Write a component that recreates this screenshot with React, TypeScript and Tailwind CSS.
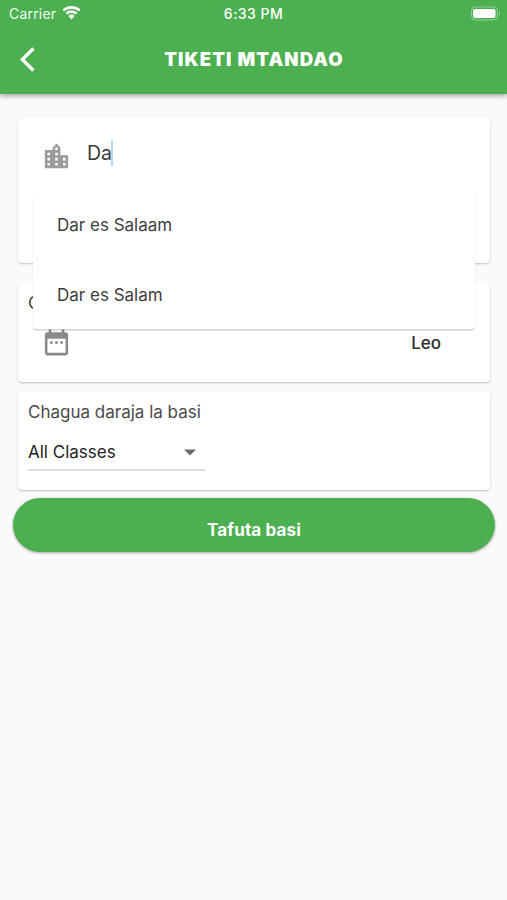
const suggestions = ['Dar es Salaam', 'Dar es Salam'];

function StatusBar() {
  return (
    <div className="relative flex h-[26px] items-center justify-between pl-[9px] pr-[6px] text-white">
      <div className="flex items-center gap-[6px] pt-[2px]">
        <span className="text-[14px] leading-4 tracking-[0.2px] text-green-50">Carrier</span>
        <svg className="-mt-[2px]" width="19" height="14" viewBox="0 0 19 14" fill="currentColor">
          <path d="M9.500 0C6 0 2.800 1.300 0.500 3.600l1.700 1.900C4.100 3.700 6.700 2.700 9.500 2.700s5.400 1 7.300 2.800l1.700-1.900C16.200 1.300 13 0 9.500 0z" />
          <path d="M9.500 4.300c-2.300 0-4.400.9-6 2.400l1.700 1.900c1.100-1 2.600-1.700 4.300-1.700s3.200.7 4.300 1.700l1.700-1.900c-1.600-1.500-3.700-2.400-6-2.400z" />
          <path d="M9.500 8.600c-1.200 0-2.200.5-3 1.300l3 3.600 3-3.600c-.8-.8-1.800-1.300-3-1.300z" />
        </svg>
      </div>
      <span className="absolute inset-x-0 top-[6px] text-center text-[14px] leading-4 font-medium tracking-[0.45px]">
        6:33 PM
      </span>
      <svg width="31" height="15" viewBox="0 0 31 15" fill="none">
        <rect x="1.500" y="1" width="26" height="13" rx="4" stroke="#93cf96" strokeWidth="1" />
        <rect x="3" y="3" width="22.500" height="9" rx="2" fill="#fff" />
        <path d="M29 5.500c1.300.7 1.300 3.300 0 4z" fill="#93cf96" />
      </svg>
    </div>
  );
}

function Suggestions() {
  return (
    <ul className="absolute left-[15px] top-[72px] z-20 h-[139px] w-[442px] rounded-[4px] bg-white shadow-[0_2px_1px_rgba(0,0,0,0.1),0_1px_2px_rgba(0,0,0,0.08)] before:absolute before:-inset-x-2 before:-top-2 before:h-3 before:bg-white">
      {suggestions.map((name) => (
        <li key={name} className="flex h-[70px] items-center pl-6 pt-px text-[17px] text-[#3e3e3e]">
          {name}
        </li>
      ))}
    </ul>
  );
}

export default function App() {
  return (
    <div className="h-[900px] w-[507px] overflow-hidden bg-[#fafafa] font-['Inter',sans-serif]">
      {/* App bar */}
      <header className="relative h-[94px] bg-[#4caf50] shadow-[0_2px_5px_rgba(0,0,0,0.35)]">
        <StatusBar />
        <div className="relative flex h-[67px] items-center justify-center">
          <button className="absolute left-[20px] top-[19px]" aria-label="Back">
            <svg width="15" height="29" viewBox="0 0 12 24" fill="#fff" stroke="#fff" strokeWidth="0.500">
              <path d="M11.670 3.870L9.900 2.100 0 12l9.900 9.900 1.770-1.770L3.540 12z" />
            </svg>
          </button>
          <h1 className="pl-px pt-px text-[18.5px] font-black tracking-[1.15px] text-white">TIKETI MTANDAO</h1>
        </div>
      </header>

      <main className="px-[18px] pt-6">
        {/* Departure city */}
        <section className="relative h-[145px] w-[472px] rounded-[4px] bg-white shadow-[0_1px_2px_rgba(0,0,0,0.24)]">
          <div className="flex pl-6 pt-[22px]">
            <svg className="-ml-px mt-px h-[31px] w-[31px]" viewBox="0 0 24 24" fill="#9b9b9b">
              <path d="M15 11V5l-3-3-3 3v2H3v14h18V11h-6zm-8 8H5v-2h2v2zm0-4H5v-2h2v2zm0-4H5V9h2v2zm6 8h-2v-2h2v2zm0-4h-2v-2h2v2zm0-4h-2V9h2v2zm0-4h-2V5h2v2zm6 12h-2v-2h2v2zm0-4h-2v-2h2v2z" />
            </svg>
            <div className="ml-[15px] flex h-[26px] items-center text-[19.5px] text-[#3a3a3a]">
              <span className="pt-[2px]">Da</span>
              <span className="-ml-px h-[26px] w-[2px] bg-[#b5d9f5]" />
            </div>
          </div>
          <Suggestions />
        </section>

        {/* Travel date */}
        <section className="mt-5 h-[99px] w-[472px] rounded-[4px] bg-white px-[10px] pt-[9px] shadow-[0_1px_2px_rgba(0,0,0,0.24)]">
          <p className="text-[17px] leading-[22px] text-[#3e3e3e]">C</p>
          <div className="flex items-center justify-between pl-[14px] pr-[39px] pt-[13px]">
            <svg className="-ml-px h-[31px] w-[31px]" viewBox="0 0 24 24" fill="#8a8a8a">
              <path d="M9 11H7v2h2v-2zm4 0h-2v2h2v-2zm4 0h-2v2h2v-2zm2-7h-1V2h-2v2H8V2H6v2H5c-1.110 0-2 .9-2 2v14c0 1.100.89 2 2 2h14c1.100 0 2-.9 2-2V6c0-1.100-.9-2-2-2zm0 16H5V9h14v11z" />
            </svg>
            <span className="pt-[2px] text-[17px] font-medium text-[#2c2c2c]">Leo</span>
          </div>
        </section>

        {/* Bus class */}
        <section className="mt-[9px] h-[99px] w-[472px] rounded-[4px] bg-white px-[10px] pt-[10px] shadow-[0_1px_2px_rgba(0,0,0,0.24)]">
          <p className="text-[17px] leading-[22px] text-[#4a4a4a]">Chagua daraja la basi</p>
          <div className="mt-[10px] flex h-[38px] w-[177px] items-center justify-between border-b-2 border-[#dedede] pr-2 text-[17px] text-[#222]">
            <span className="pt-1">All Classes</span>
            <svg className="mt-[2px]" width="14" height="7" viewBox="0 0 14 7" fill="#6b6b6b">
              <path d="M1 0.500h12l-6 6z" />
            </svg>
          </div>
        </section>

        <button className="-mx-[5px] mt-2 flex h-[54px] w-[482px] items-center justify-center rounded-[27px] bg-[#4caf50] pt-[11px] text-[17px] font-bold tracking-[0.15px] text-white shadow-[0_1px_3px_rgba(0,0,0,0.35)]">
          Tafuta basi
        </button>
      </main>
    </div>
  );
}
